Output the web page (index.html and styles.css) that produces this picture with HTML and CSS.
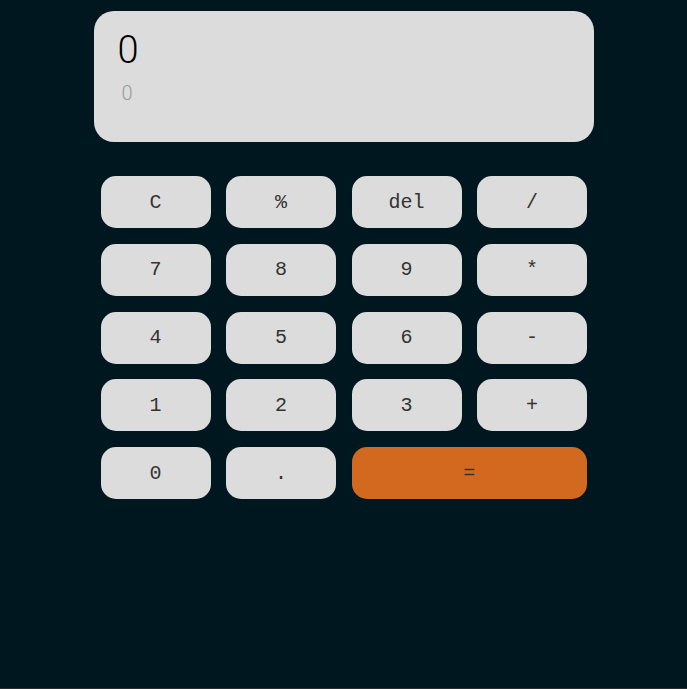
FILE: index.html
```html
<!DOCTYPE html>
<html>
<head>
<meta charset="utf-8">
<link rel="stylesheet" href="styles.css">
</head>
<body>
<div class="calculator">
  <div class="display">
    <div class="current">0</div>
    <div class="previous">0</div>
  </div>
  <div class="keys">
    <button class="key">C</button>
    <button class="key">%</button>
    <button class="key">del</button>
    <button class="key">/</button>
    <button class="key">7</button>
    <button class="key">8</button>
    <button class="key">9</button>
    <button class="key">*</button>
    <button class="key">4</button>
    <button class="key">5</button>
    <button class="key">6</button>
    <button class="key">-</button>
    <button class="key">1</button>
    <button class="key">2</button>
    <button class="key">3</button>
    <button class="key">+</button>
    <button class="key">0</button>
    <button class="key">.</button>
    <button class="key equals">=</button>
  </div>
</div>
</body>
</html>
```
FILE: styles.css
```css
html {
  background: #2a2d30;
}
body {
  margin: 0;
  height: 688px;
  background: #00171f;
  font-family: "Liberation Mono", monospace;
}
.calculator {
  width: 500px;
  margin: 0 auto;
  padding-top: 11px;
}
.display {
  height: 131px;
  box-sizing: border-box;
  background: #dcdcdc;
  border-radius: 20px;
  padding: 18px 24px;
  font-family: Roboto, "Liberation Sans", sans-serif;
}
.current {
  font-size: 38px;
  font-weight: 300;
  color: #000;
  line-height: 42px;
}
.previous {
  font-size: 20px;
  font-weight: 300;
  color: #9a9a9a;
  margin-top: 10px;
  margin-left: 4px;
  line-height: 24px;
}
.keys {
  display: grid;
  grid-template-columns: repeat(4, 110px);
  grid-auto-rows: 52px;
  column-gap: 15.5px;
  row-gap: 15.75px;
  margin: 34px 7px 0;
}
.key {
  border: none;
  border-radius: 15px;
  background: #dcdcdc;
  font-family: "Liberation Mono", monospace;
  font-size: 20px;
  color: #333;
  padding: 0;
}
.equals {
  grid-column: span 2;
  background: #d2691e;
}
```
